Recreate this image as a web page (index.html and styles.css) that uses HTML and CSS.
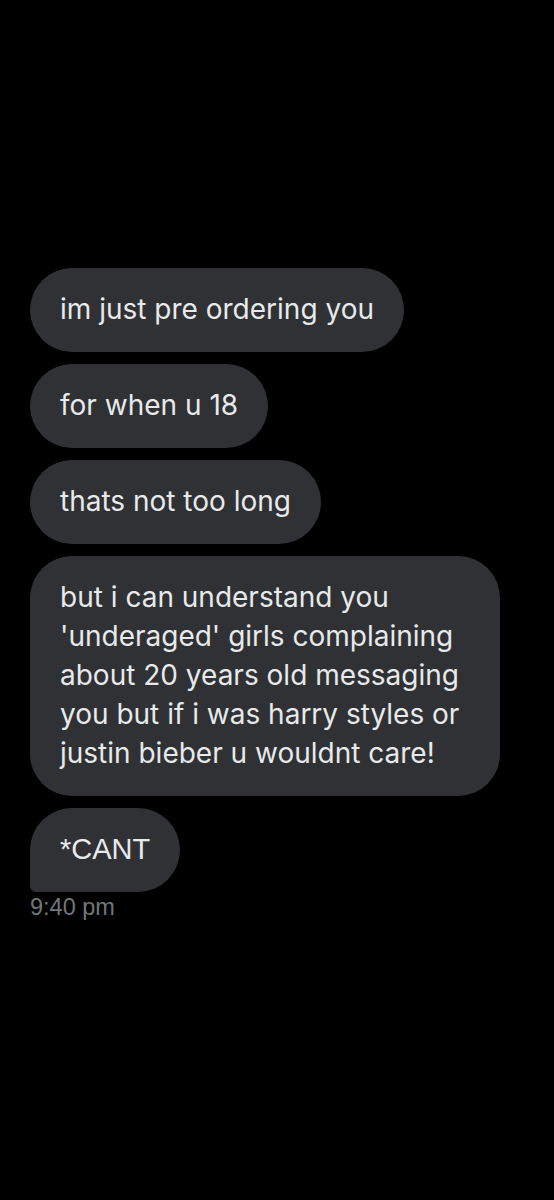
FILE: index.html
```html
<!DOCTYPE html>
<html lang="en">
  <head>
    <meta charset="UTF-8" />
    <meta name="viewport" content="width=device-width, initial-scale=1.0" />
    <title>Messages</title>
    <link rel="stylesheet" href="styles.css">
  </head>
  <body>
    <main class="thread">
      <!-- Received messages -->
      <div class="messages">
        <p class="bubble">im just pre ordering you</p>
        <p class="bubble">for when u 18</p>
        <p class="bubble">thats not too long</p>
        <p class="bubble">but i can understand you 'underaged' girls complaining about 20 years old messaging you but if i was harry styles or justin bieber u wouldnt care!</p>
        <p class="bubble last"><span class="fallback">*CANT</span></p>
      </div>
      <time class="stamp">9:40 pm</time>
    </main>
  </body>
</html>
```

FILE: styles.css
```css
/*
  Global styles
*/

* {
  margin: 0;
  padding: 0;
  box-sizing: border-box;
}
:root {
  --bubble: #2f3134;
  --text: #e7e9ea;
  --gray: #71767b;
}
body {
  min-height: 100vh;
  background-color: #000;
  font-family: Inter, "Noto Sans", sans-serif;
}

/*
  Thread
*/

.thread {
  display: flex;
  flex-direction: column;
  align-items: flex-start;
  padding: 268px 30px 0;
}
.messages {
  gap: 12px;
  display: flex;
  flex-direction: column;
  align-items: flex-start;
}
.bubble {
  max-width: 470px;
  padding: 22px 30px 23px;
  border-radius: 42px;
  color: var(--text);
  font-size: 28px;
  line-height: 39px;
  background-color: var(--bubble);
}
.bubble.last {
  border-bottom-left-radius: 6px;
}
.bubble .fallback {
  font-family: "Liberation Sans", Arial, sans-serif;
  font-size: 29px;
}
.stamp {
  margin-top: 1px;
  color: var(--gray);
  font-size: 23.5px;
  line-height: 28px;
  font-family: "Liberation Sans", Arial, sans-serif;
}
```
